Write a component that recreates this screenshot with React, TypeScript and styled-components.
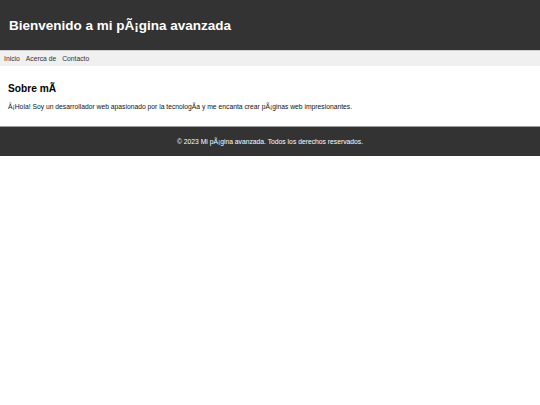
import styled, { createGlobalStyle } from 'styled-components';

const GlobalStyle = createGlobalStyle`
  html, body {
    margin: 0;
    padding: 0;
    background: #ffffff;
    font-family: "Liberation Sans", Arial, sans-serif;
  }
`;

const links = ['Inicio', 'Acerca de', 'Contacto'];

const Header = styled.header`
  background: #333333;
  color: #ffffff;
  height: 50px;
  display: flex;
  align-items: center;
  padding: 0 9px;
  box-sizing: border-box;
`;

const Title = styled.h1`
  margin: 0;
  font-size: 13.5px;
  font-weight: bold;
`;

const Nav = styled.nav`
  background: #f0f0f0;
  border-top: 1px solid #cfcfcf;
  height: 15px;
  display: flex;
  align-items: center;
  gap: 6px;
  padding: 0 4px;
`;

const NavLink = styled.a`
  color: #333333;
  font-size: 6.75px;
  text-decoration: none;
`;

const Main = styled.main`
  padding: 17px 8px 0;
  height: 60px;
  box-sizing: border-box;
`;

const Heading = styled.h2`
  margin: 0 0 9px;
  font-size: 10.2px;
  font-weight: bold;
  color: #000000;
`;

const Text = styled.p`
  margin: 0;
  font-size: 6.75px;
  color: #111111;
`;

const Footer = styled.footer`
  background: #333333;
  border-top: 1px solid #9a9a9a;
  color: #ffffff;
  height: 29px;
  display: flex;
  align-items: center;
  justify-content: center;
  font-size: 6.75px;
`;

const App = () => (
  <>
    <GlobalStyle />
    <Header>
      <Title>Bienvenido a mi pÃ¡gina avanzada</Title>
    </Header>
    <Nav>
      {links.map((l) => (
        <NavLink key={l} href="#">{l}</NavLink>
      ))}
    </Nav>
    <Main>
      <Heading>Sobre mÃ­</Heading>
      <Text>Â¡Hola! Soy un desarrollador web apasionado por la tecnologÃ­a y me encanta crear pÃ¡ginas web impresionantes.</Text>
    </Main>
    <Footer>© 2023 Mi pÃ¡gina avanzada. Todos los derechos reservados.</Footer>
  </>
);

export default App;
